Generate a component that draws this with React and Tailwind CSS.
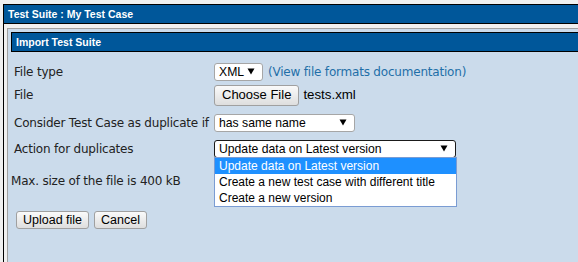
import React from "react";

const lbl = "font-['DejaVu_Sans',sans-serif] text-[12px] tracking-[-0.2px]";
const ctl = "font-['Liberation_Sans',Arial,sans-serif] text-black";

function Arrow() {
  return (
    <svg width="8" height="7" viewBox="0 0 8 7" className="shrink-0">
      <path d="M0.5 0.5 H7.5 L4 6.5 Z" fill="#000" />
    </svg>
  );
}

function FakeSelect({ w, text, focused }) {
  return (
    <div
      className={`${ctl} flex h-[18px] items-center justify-between rounded-[3px] border bg-white pl-[4px] pr-[7px] text-[12.2px] leading-[16px] ${
        focused ? "border-[#1a1a1a]" : "border-[#a6a6a6]"
      }`}
      style={{ width: w }}
    >
      <span>{text}</span>
      <Arrow />
    </div>
  );
}

function Btn({ children, h = "h-[18px]", size = "text-[12.5px]" }) {
  return (
    <div
      className={`${ctl} ${h} ${size} flex items-center rounded-[3px] border border-[#a0a0a0] bg-gradient-to-b from-[#fafafa] to-[#dedede] px-[6px]`}
    >
      {children}
    </div>
  );
}

const hdr =
  "h-[20px] border-y border-black bg-[#00579a] pl-[4px] font-['Liberation_Sans',Arial,sans-serif] text-[10.5px] font-bold leading-[18px] text-white";

export default function App() {
  return (
    <div className="h-[262px] w-[578px] overflow-hidden bg-[#f0f0f0] pl-[3px] pt-[4px]">
      <div className="h-full border-l border-black">
        <div className={hdr}>Test Suite : My Test Case</div>
        <div className="h-full pl-[3px] pt-[4px]">
          <div className="h-full border-l border-t border-[#a0a0a0] bg-[#cbdbeb] pl-[3px] pt-[3px]">
            <div className={`${hdr} border-l`}>Import Test Suite</div>
            <div className="pt-[8px] text-[#222]">
              <div className="flex h-[23px] items-center">
                <div className={`${lbl} w-[203px] pl-[3px]`}>File type</div>
                <FakeSelect w={49} text="XML" />
                <span className={`${lbl} ml-[5px] text-[#1f6fa8]`}>(View file formats documentation)</span>
              </div>
              <div className="flex h-[24px] items-center">
                <div className={`${lbl} w-[203px] pl-[3px]`}>File</div>
                <Btn h="h-[21px]" size="text-[13px]">
                  <span className="px-[1px]">Choose File</span>
                </Btn>
                <span className={`${ctl} ml-[4px] text-[13.3px]`}>tests.xml</span>
              </div>
              <div className="flex h-[31px] items-center">
                <div className={`${lbl} w-[203px] pl-[3px]`}>Consider Test Case as duplicate if</div>
                <FakeSelect w={141} text="has same name" />
              </div>
              <div className="flex h-[21px] items-center">
                <div className={`${lbl} w-[203px] pl-[3px]`}>Action for duplicates</div>
                <div className="relative">
                  <FakeSelect w={242} text="Update data on Latest version" focused />
                  <div
                    className={`${ctl} absolute left-0 top-[17px] z-10 w-[243px] border border-[#7a9cd3] bg-white text-[12px] leading-[16px]`}
                  >
                    <div className="h-[16px] bg-[#1e90ff] pl-[4px] text-white">Update data on Latest version</div>
                    <div className="h-[16px] pl-[4px]">Create a new test case with different title</div>
                    <div className="h-[16px] pl-[4px]">Create a new version</div>
                  </div>
                </div>
              </div>
              <div className={`${lbl} mt-[14px] leading-[16px]`}>Max. size of the file is 400 kB</div>
              <div className="mt-[22px] flex gap-[5px] pl-[5px]">
                <Btn>Upload file</Btn>
                <Btn>Cancel</Btn>
              </div>
            </div>
          </div>
        </div>
      </div>
    </div>
  );
}
